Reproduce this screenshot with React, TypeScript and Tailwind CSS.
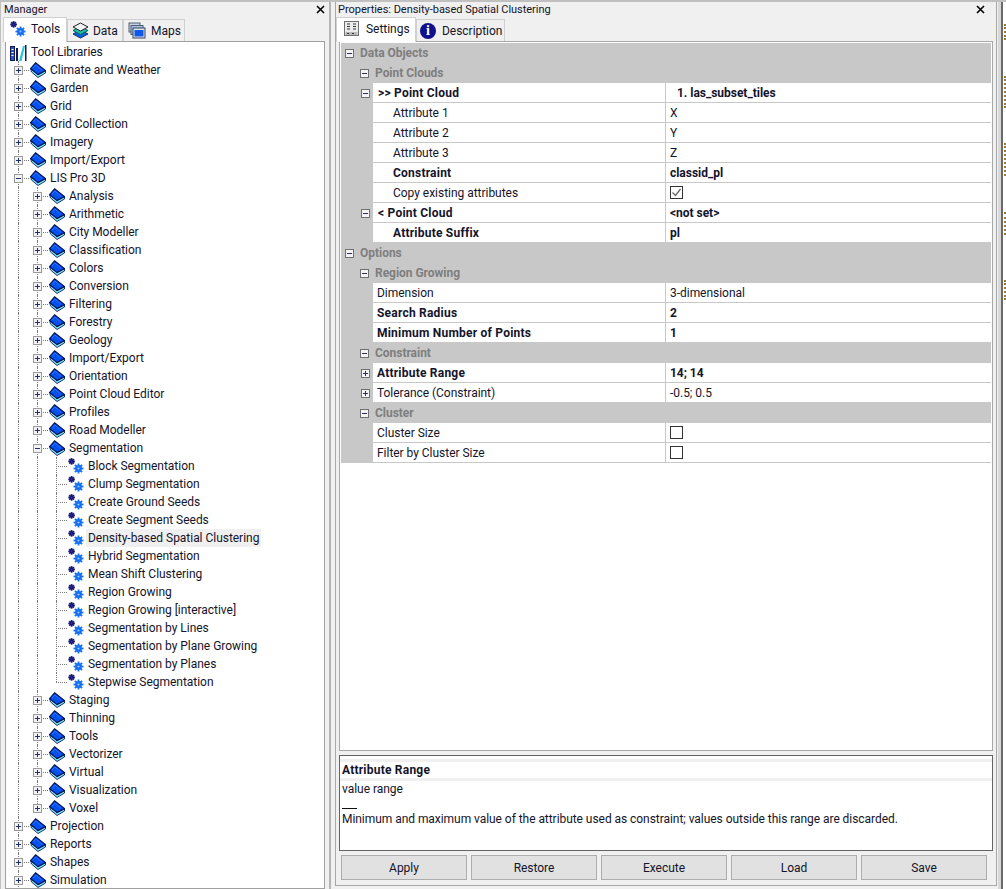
import type { ReactNode } from "react";

const font = "font-['Roboto',sans-serif] text-[12px] tracking-[-0.03px] leading-none text-[#14142a]";

function Book() {
  return (
    <svg width="16" height="16" viewBox="0 0 16 16" className="shrink-0">
      <path d="M.6 6.5 L8 12.6 L15.5 8.6 L15.5 11 L8 15.5 L1.5 10Z" fill="#86e4f0" stroke="#05205c" strokeWidth="0.9" />
      <path d="M.6 6.5 L5.6 .8 L15.5 8.6 L8 12.6Z" fill="#0450f0" stroke="#021250" strokeWidth="1.1" />
      <path d="M3 6.2 L5.8 3 L12 8.2" fill="none" stroke="#2f70ff" strokeWidth="1" />
    </svg>
  );
}

function Gear({ x, y, r, fill, hole }: { x: number; y: number; r: number; fill: string; hole: string }) {
  const teeth = [0, 45, 90, 135];
  return (
    <g>
      {teeth.map((a) => (
        <rect key={a} x={x - 0.9} y={y - r - 1.6} width="1.8" height={2 * r + 3.2} fill={fill} transform={`rotate(${a} ${x} ${y})`} />
      ))}
      <circle cx={x} cy={y} r={r} fill={fill} />
      <circle cx={x} cy={y} r={r * 0.3} fill={hole} />
    </g>
  );
}

function ToolIcon() {
  return (
    <svg width="16" height="16" viewBox="0 0 16 16" className="shrink-0">
      <Gear x={3.6} y={3.4} r={1.7} fill="#18187a" hole="#4848b0" />
      <Gear x={10.5} y={10.5} r={3.4} fill="#1470f0" hole="#9cc8ff" />
    </svg>
  );
}

function LibraryIcon() {
  return (
    <svg width="17" height="17" viewBox="0 0 17 17" className="shrink-0">
      <rect x=".5" y="2.5" width="4" height="14" fill="#2a55c8" stroke="#111a55" />
      <path d="M1.5 5.5h2M1.5 8.5h2M1.5 11.5h2" stroke="#fff" />
      <rect x="6" y="4" width="2" height="13" fill="#111a55" />
      <path d="M9 17 L13 2 L15 2 L11.5 17Z" fill="#22c8e0" />
      <rect x="15" y="1" width="1.5" height="16" fill="#111a55" />
    </svg>
  );
}

function LayersIcon() {
  return (
    <svg width="17" height="17" viewBox="0 0 17 17" className="shrink-0">
      <path d="M1 12 L8.5 8 L16 12 L8.5 16Z" fill="#0a64e0" stroke="#0a2c6c" />
      <path d="M1 8.5 L8.5 4.5 L16 8.5 L8.5 12.5Z" fill="#1ac0a8" stroke="#0c5c5c" />
      <path d="M1 5 L8.5 1 L16 5 L8.5 9Z" fill="#f4f4f4" stroke="#222" />
    </svg>
  );
}

function MapsIcon() {
  return (
    <svg width="18" height="17" viewBox="0 0 18 17" className="shrink-0">
      <rect x="1" y="1" width="11" height="9" fill="#c8d4e4" stroke="#4c5c70" />
      <rect x="3" y="3.5" width="12" height="9" fill="#a8c0e0" stroke="#4c5c70" />
      <rect x="5" y="6" width="12" height="10" fill="#dde6f0" stroke="#33445c" />
      <rect x="6.5" y="8" width="9" height="6.5" fill="#0f58e8" />
    </svg>
  );
}

function SettingsIcon() {
  return (
    <svg width="15" height="15" viewBox="0 0 15 15" className="shrink-0">
      <rect x=".5" y=".5" width="14" height="14" fill="#ececec" stroke="#707070" />
      <rect x="1.5" y="11" width="12" height="3" fill="#b8b8b8" />
      <path d="M3 3h3M3 5.5h3M3 8h3M9 3h3M9 5.5h3M9 8h3" stroke="#333" />
      <path d="M3 12.5h2M8 12.5h2" stroke="#333" />
    </svg>
  );
}

function CloseX() {
  return (
    <svg width="9" height="9" viewBox="0 0 9 9" className="shrink-0">
      <path d="M1 1 L8 8 M8 1 L1 8" stroke="#000" strokeWidth="1.6" />
    </svg>
  );
}

function Expander({ open }: { open: boolean }) {
  return (
    <span className="flex h-[9px] w-[9px] shrink-0 items-center justify-center border border-[#9a9a9a] bg-[#f2f2f2]">
      <svg width="7" height="7" viewBox="0 0 7 7">
        <path d={open ? "M1 3.5h5" : "M1 3.5h5M3.5 1v5"} stroke="#20306a" strokeWidth="1" />
      </svg>
    </span>
  );
}

type Node = { label: string; open?: boolean; leaf?: boolean; selected?: boolean; children?: Node[] };

const seg = [
  "Block Segmentation",
  "Clump Segmentation",
  "Create Ground Seeds",
  "Create Segment Seeds",
  "Density-based Spatial Clustering",
  "Hybrid Segmentation",
  "Mean Shift Clustering",
  "Region Growing",
  "Region Growing [interactive]",
  "Segmentation by Lines",
  "Segmentation by Plane Growing",
  "Segmentation by Planes",
  "Stepwise Segmentation",
];

const lis = [
  "Analysis", "Arithmetic", "City Modeller", "Classification", "Colors", "Conversion", "Filtering", "Forestry",
  "Geology", "Import/Export", "Orientation", "Point Cloud Editor", "Profiles", "Road Modeller",
];
const lis2 = ["Staging", "Thinning", "Tools", "Vectorizer", "Virtual", "Visualization", "Voxel"];

const tree: Node[] = [
  ...["Climate and Weather", "Garden", "Grid", "Grid Collection", "Imagery", "Import/Export"].map((label) => ({ label })),
  {
    label: "LIS Pro 3D",
    open: true,
    children: [
      ...lis.map((label) => ({ label })),
      {
        label: "Segmentation",
        open: true,
        children: seg.map((label) => ({ label, leaf: true, selected: label.startsWith("Density") })),
      },
      ...lis2.map((label) => ({ label })),
    ],
  },
  ...["Projection", "Reports", "Shapes", "Simulation"].map((label) => ({ label })),
];

// one 19px wide guide cell: dotted trunk, optional branch to the right
function Guide({ trunk, half, branch, children }: { trunk: boolean; half?: boolean; branch?: boolean; children?: ReactNode }) {
  return (
    <span className="relative flex h-full w-[19px] shrink-0 items-center pl-[5px]">
      {trunk && (
        <span className={`absolute left-[9px] top-0 border-l border-dotted border-[#7a7a7a] ${half ? "h-[9px]" : "h-full"}`} />
      )}
      {branch && <span className="absolute left-[9px] top-[9px] w-[11px] border-t border-dotted border-[#7a7a7a]" />}
      <span className="relative">{children}</span>
    </span>
  );
}

function TreeRows({ nodes, trunks }: { nodes: Node[]; trunks: boolean[] }) {
  return (
    <>
      {nodes.map((node, i) => {
        const last = i === nodes.length - 1;
        const isTop = trunks.length === 0;
        return (
          <div key={node.label}>
            <div className="flex h-[18px] items-center pl-[3px]">
              {trunks.map((t, j) => (
                <Guide key={j} trunk={t} />
              ))}
              <Guide trunk half={last && !isTop} branch>
                {!node.leaf && <Expander open={!!node.open} />}
              </Guide>
              <span className="ml-[2px]">{node.leaf ? <ToolIcon /> : <Book />}</span>
              <span className={`ml-[2px] flex h-[18px] items-center whitespace-nowrap px-[2px] ${node.selected ? "bg-[#f0f0f0]" : ""}`}>
                {node.label}
              </span>
            </div>
            {node.children && <TreeRows nodes={node.children} trunks={[...trunks, isTop || !last]} />}
          </div>
        );
      })}
    </>
  );
}

function Tab({ active, icon, label, cls }: { active?: boolean; icon: ReactNode; label: string; cls: string }) {
  return (
    <div
      className={`flex items-center border border-b-0 border-[#d0d0d0] ${cls} ${
        active ? "relative z-10 -mb-px h-[25px] bg-white pb-[3px]" : "h-[22px] bg-[#f0f0f0]"
      }`}
    >
      {icon}
      <span>{label}</span>
    </div>
  );
}

function Minus({ open = true }: { open?: boolean }) {
  return (
    <span className="flex h-[9px] w-[9px] shrink-0 items-center justify-center border border-[#707070] bg-[#f4f4f4]">
      <svg width="7" height="7" viewBox="0 0 7 7">
        <path d={open ? "M1 3.5h5" : "M1 3.5h5M3.5 1v5"} stroke="#30305a" />
      </svg>
    </span>
  );
}

function Header({ label, depth }: { label: string; depth: 0 | 1 }) {
  return (
    <div className={`flex h-[20px] items-center gap-[6px] bg-[#c8c8c8] font-bold text-[#7e7e7e] ${depth === 0 ? "pl-[4px]" : "pl-[19px]"}`}>
      <Minus />
      <span>{label}</span>
    </div>
  );
}

function Box({ checked }: { checked?: boolean }) {
  return (
    <span className="flex h-[13px] w-[13px] items-center justify-center border border-[#333] bg-white">
      {checked && (
        <svg width="11" height="11" viewBox="0 0 11 11">
          <path d="M1.5 5.5 L4.5 8.5 L9.5 2" fill="none" stroke="#666" strokeWidth="1.3" />
        </svg>
      )}
    </span>
  );
}

function Prop({
  label,
  value,
  bold,
  valueBold,
  indent = "pl-[4px]",
  icon,
  valueIndent = "pl-[4px]",
}: {
  label: string;
  value: ReactNode;
  bold?: boolean;
  valueBold?: boolean;
  indent?: string;
  icon?: ReactNode;
  valueIndent?: string;
}) {
  return (
    <div className="flex h-[20px] bg-[#c8c8c8]">
      <div className="flex w-[32px] shrink-0 items-center justify-end pr-[3px]">{icon}</div>
      <div className={`flex w-[293px] min-w-0 shrink-0 items-center border-b border-r border-[#c8c8c8] bg-white ${indent} ${bold ? "font-bold tracking-[0.22px]" : ""}`}>
        {label}
      </div>
      <div className={`flex flex-1 items-center border-b border-[#c8c8c8] bg-white ${valueIndent} ${valueBold ? "font-bold" : ""}`}>
        {value}
      </div>
    </div>
  );
}

function Button({ label }: { label: string }) {
  return (
    <button className="flex h-[25px] w-[126px] items-center justify-center border border-[#adadad] bg-[#e1e1e1] text-[#14142a]">
      {label}
    </button>
  );
}

// neighbouring window's edge, only a sliver of it is visible
const marks = ["mt-[22px] h-[16px]", "mt-[36px] h-[32px]", "mt-[35px] h-[33px]", "mt-[36px] h-[23px]", "mt-[45px] h-[20px]"];

export default function App() {
  return (
    <div className={`flex h-[889px] w-[1006px] overflow-hidden border-t-2 border-l border-[#c0c0c0] bg-[#f0f0f0] ${font}`}>
      <aside className="flex w-[330px] shrink-0 flex-col border-r-2 border-[#b4b4b4]">
        <div className="flex h-[15px] items-center justify-between pl-[3px] pr-[4px] text-[11px]">
          <span>Manager</span>
          <CloseX />
        </div>
        <div className="flex items-end pl-[2px]">
          <Tab active cls="w-[64px] gap-[5px] pl-[6px]" icon={<ToolIcon />} label="Tools" />
          <Tab cls="w-[56px] gap-[4px] pl-[4px]" icon={<LayersIcon />} label="Data" />
          <Tab cls="w-[62px] gap-[5px] pl-[4px]" icon={<MapsIcon />} label="Maps" />
        </div>
        <div className="mx-[4px] flex-1 overflow-hidden border border-[#a0a0a0] bg-white pt-[1px]">
          <div className="flex h-[18px] items-center pl-[4px]">
            <LibraryIcon />
            <span className="ml-[4px]">Tool Libraries</span>
          </div>
          <TreeRows nodes={tree} trunks={[]} />
        </div>
      </aside>

      <main className="mb-[3px] ml-[4px] flex w-[662px] shrink-0 flex-col border-x border-b border-[#a8a8a8]">
        <div className="flex h-[15px] items-center justify-between pl-[2px] pr-[11px] text-[11px]">
          <span>Properties: Density-based Spatial Clustering</span>
          <CloseX />
        </div>
        <div className="flex items-end">
          <Tab active cls="w-[80px] gap-[7px] pl-[7px]" icon={<SettingsIcon />} label="Settings" />
          <Tab
            cls="w-[89px] gap-[6px] pl-[3px]"
            icon={
              <span className="flex h-[16px] w-[16px] shrink-0 items-center justify-center rounded-full bg-[#10108c] font-['Liberation_Serif',serif] text-[14px] font-bold text-white">
                i
              </span>
            }
            label="Description"
          />
        </div>
        <div className="mx-[3px] h-[710px] border border-[#a8a8a8] bg-white p-[1px]">
          <Header label="Data Objects" depth={0} />
          <Header label="Point Clouds" depth={1} />
          <Prop label=">> Point Cloud" bold indent="pl-[5px]" value="1. las_subset_tiles" valueBold valueIndent="pl-[11px]" icon={<Minus />} />
          <Prop label="Attribute 1" indent="pl-[20px]" value="X" />
          <Prop label="Attribute 2" indent="pl-[20px]" value="Y" />
          <Prop label="Attribute 3" indent="pl-[20px]" value="Z" />
          <Prop label="Constraint" bold indent="pl-[20px]" value="classid_pl" valueBold />
          <Prop label="Copy existing attributes" indent="pl-[20px]" value={<Box checked />} />
          <Prop label="< Point Cloud" bold indent="pl-[5px]" value="<not set>" valueBold icon={<Minus />} />
          <Prop label="Attribute Suffix" bold indent="pl-[20px]" value="pl" valueBold />
          <Header label="Options" depth={0} />
          <Header label="Region Growing" depth={1} />
          <Prop label="Dimension" value="3-dimensional" />
          <Prop label="Search Radius" bold value="2" valueBold />
          <Prop label="Minimum Number of Points" bold value="1" valueBold />
          <Header label="Constraint" depth={1} />
          <Prop label="Attribute Range" bold value="14; 14" valueBold icon={<Minus open={false} />} />
          <Prop label="Tolerance (Constraint)" value="-0.5; 0.5" icon={<Minus open={false} />} />
          <Header label="Cluster" depth={1} />
          <Prop label="Cluster Size" value={<Box />} />
          <Prop label="Filter by Cluster Size" value={<Box />} />
        </div>
        <div className="mx-[3px] mt-[4px] h-[96px] border border-[#646464] bg-white">
          <div className="mt-[3px] flex h-[22px] items-center border-y-[3px] border-[#f0f0f0] pl-[2px] font-bold tracking-[0.22px]">Attribute Range</div>
          <div className="pl-[2px] leading-[16px]">value range</div>
          <div className="ml-[2px] mt-[11px] w-[15px] border-t border-[#111]" />
          <div className="pl-[2px] pt-[2px] leading-[16px] tracking-[-0.05px]">
            Minimum and maximum value of the attribute used as constraint; values outside this range are discarded.
          </div>
        </div>
        <div className="mt-[4px] flex gap-[4px] pl-[5px]">
          {["Apply", "Restore", "Execute", "Load", "Save"].map((b) => (
            <Button key={b} label={b} />
          ))}
        </div>
      </main>

      <div className="flex flex-1 bg-[#f0f0f0] pl-[1px]">
        <div className="w-[3px] shrink-0 bg-[#d8d8d8]" />
        <div className="flex flex-1 flex-col border-l-2 border-[#6a6a6a] bg-white pl-[1px]">
          {marks.map((m) => (
            <span key={m} className={`w-[2px] border-l-2 border-dotted border-[#9a7a30] ${m}`} />
          ))}
        </div>
      </div>
    </div>
  );
}
